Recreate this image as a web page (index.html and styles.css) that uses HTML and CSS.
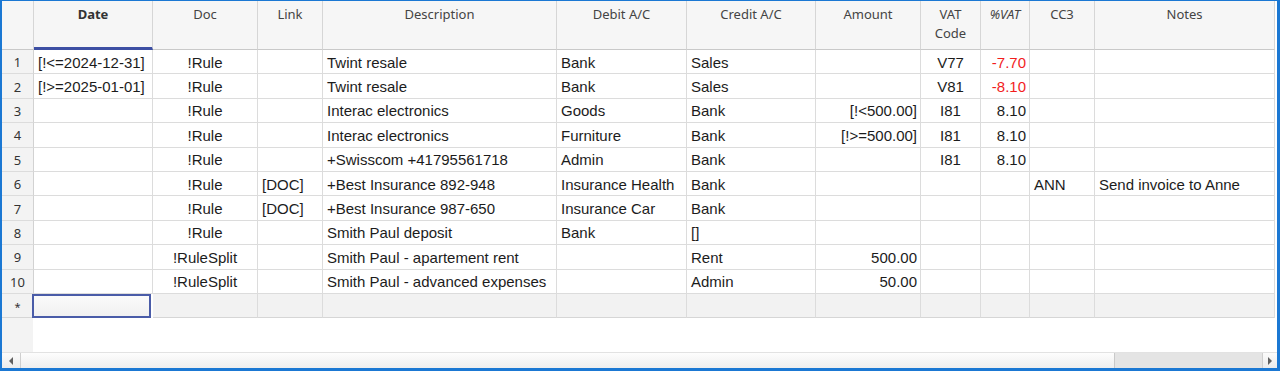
FILE: index.html
```html
<!DOCTYPE html>
<html>
<head>
<meta charset="utf-8">
<link rel="stylesheet" href="styles.css">
</head>
<body>
<div class="frame">
  <div class="viewport">
    <div class="row head">
      <div class="cell hc corner"></div>
      <div class="cell hc sel">Date</div>
      <div class="cell hc">Doc</div>
      <div class="cell hc">Link</div>
      <div class="cell hc">Description</div>
      <div class="cell hc">Debit A/C</div>
      <div class="cell hc">Credit A/C</div>
      <div class="cell hc">Amount</div>
      <div class="cell hc">VAT<br>Code</div>
      <div class="cell hc it">%VAT</div>
      <div class="cell hc">CC3</div>
      <div class="cell hc">Notes</div>
    </div>

    <div class="row">
      <div class="cell num">1</div>
      <div class="cell l">[!&lt;=2024-12-31]</div>
      <div class="cell c">!Rule</div>
      <div class="cell l"></div>
      <div class="cell l">Twint resale</div>
      <div class="cell l">Bank</div>
      <div class="cell l">Sales</div>
      <div class="cell r"></div>
      <div class="cell c">V77</div>
      <div class="cell r neg">-7.70</div>
      <div class="cell l"></div>
      <div class="cell l"></div>
    </div>
    <div class="row">
      <div class="cell num">2</div>
      <div class="cell l">[!&gt;=2025-01-01]</div>
      <div class="cell c">!Rule</div>
      <div class="cell l"></div>
      <div class="cell l">Twint resale</div>
      <div class="cell l">Bank</div>
      <div class="cell l">Sales</div>
      <div class="cell r"></div>
      <div class="cell c">V81</div>
      <div class="cell r neg">-8.10</div>
      <div class="cell l"></div>
      <div class="cell l"></div>
    </div>
    <div class="row">
      <div class="cell num">3</div>
      <div class="cell l"></div>
      <div class="cell c">!Rule</div>
      <div class="cell l"></div>
      <div class="cell l">Interac electronics</div>
      <div class="cell l">Goods</div>
      <div class="cell l">Bank</div>
      <div class="cell r">[!&lt;500.00]</div>
      <div class="cell c">I81</div>
      <div class="cell r">8.10</div>
      <div class="cell l"></div>
      <div class="cell l"></div>
    </div>
    <div class="row">
      <div class="cell num">4</div>
      <div class="cell l"></div>
      <div class="cell c">!Rule</div>
      <div class="cell l"></div>
      <div class="cell l">Interac electronics</div>
      <div class="cell l">Furniture</div>
      <div class="cell l">Bank</div>
      <div class="cell r">[!&gt;=500.00]</div>
      <div class="cell c">I81</div>
      <div class="cell r">8.10</div>
      <div class="cell l"></div>
      <div class="cell l"></div>
    </div>
    <div class="row">
      <div class="cell num">5</div>
      <div class="cell l"></div>
      <div class="cell c">!Rule</div>
      <div class="cell l"></div>
      <div class="cell l">+Swisscom +41795561718</div>
      <div class="cell l">Admin</div>
      <div class="cell l">Bank</div>
      <div class="cell r"></div>
      <div class="cell c">I81</div>
      <div class="cell r">8.10</div>
      <div class="cell l"></div>
      <div class="cell l"></div>
    </div>
    <div class="row">
      <div class="cell num">6</div>
      <div class="cell l"></div>
      <div class="cell c">!Rule</div>
      <div class="cell l">[DOC]</div>
      <div class="cell l">+Best Insurance 892-948</div>
      <div class="cell l">Insurance Health</div>
      <div class="cell l">Bank</div>
      <div class="cell r"></div>
      <div class="cell c"></div>
      <div class="cell r"></div>
      <div class="cell l">ANN</div>
      <div class="cell l">Send invoice to Anne</div>
    </div>
    <div class="row">
      <div class="cell num">7</div>
      <div class="cell l"></div>
      <div class="cell c">!Rule</div>
      <div class="cell l">[DOC]</div>
      <div class="cell l">+Best Insurance 987-650</div>
      <div class="cell l">Insurance Car</div>
      <div class="cell l">Bank</div>
      <div class="cell r"></div>
      <div class="cell c"></div>
      <div class="cell r"></div>
      <div class="cell l"></div>
      <div class="cell l"></div>
    </div>
    <div class="row">
      <div class="cell num">8</div>
      <div class="cell l"></div>
      <div class="cell c">!Rule</div>
      <div class="cell l"></div>
      <div class="cell l">Smith Paul deposit</div>
      <div class="cell l">Bank</div>
      <div class="cell l">[]</div>
      <div class="cell r"></div>
      <div class="cell c"></div>
      <div class="cell r"></div>
      <div class="cell l"></div>
      <div class="cell l"></div>
    </div>
    <div class="row">
      <div class="cell num">9</div>
      <div class="cell l"></div>
      <div class="cell c">!RuleSplit</div>
      <div class="cell l"></div>
      <div class="cell l">Smith Paul - apartement rent</div>
      <div class="cell l"></div>
      <div class="cell l">Rent</div>
      <div class="cell r">500.00</div>
      <div class="cell c"></div>
      <div class="cell r"></div>
      <div class="cell l"></div>
      <div class="cell l"></div>
    </div>
    <div class="row">
      <div class="cell num">10</div>
      <div class="cell l"></div>
      <div class="cell c">!RuleSplit</div>
      <div class="cell l"></div>
      <div class="cell l">Smith Paul - advanced expenses</div>
      <div class="cell l"></div>
      <div class="cell l">Admin</div>
      <div class="cell r">50.00</div>
      <div class="cell c"></div>
      <div class="cell r"></div>
      <div class="cell l"></div>
      <div class="cell l"></div>
    </div>
    <div class="row new">
      <div class="cell num star">*</div>
      <div class="cell l current"></div>
      <div class="cell c"></div>
      <div class="cell l"></div>
      <div class="cell l"></div>
      <div class="cell l"></div>
      <div class="cell l"></div>
      <div class="cell r"></div>
      <div class="cell c"></div>
      <div class="cell r"></div>
      <div class="cell l"></div>
      <div class="cell l"></div>
    </div>
  </div>
  <div class="hscroll">
    <div class="sbtn">
      <svg width="6" height="8" viewBox="0 0 6 8"><polygon points="5,0 5,8 1,4" fill="#606060"/></svg>
    </div>
    <div class="thumb"></div>
    <div class="track"></div>
    <div class="sbtn right">
      <svg width="6" height="8" viewBox="0 0 6 8"><polygon points="1,0 1,8 5,4" fill="#606060"/></svg>
    </div>
  </div>
</div>
</body>
</html>
```

FILE: styles.css
```css
html, body {
  margin: 0;
  padding: 0;
  background: #ffffff;
  overflow: hidden;
}

.frame {
  box-sizing: border-box;
  width: 1280px;
  height: 371px;
  border-style: solid;
  border-color: #1b78d3;
  border-width: 1px 3px 3px 2px;
  display: flex;
  flex-direction: column;
  background: #ffffff;
}

.viewport {
  flex: 1;
  overflow: hidden;
  background: linear-gradient(to right, #f3f3f3 0 31px, #ffffff 31px);
}

.row {
  display: grid;
  grid-template-columns: 32px 119px 105px 65px 234px 130px 129px 105px 60px 49px 65px 180px;
  height: 24.4px;
  width: 1273px;
}

.cell {
  box-sizing: border-box;
  border-right: 1px solid #dcdcdc;
  border-bottom: 1px solid #dcdcdc;
  font-family: "Liberation Sans", Arial, sans-serif;
  font-size: 15px;
  color: #1c1c1c;
  white-space: nowrap;
  overflow: hidden;
  display: flex;
  align-items: center;
  background: #ffffff;
  padding-top: 1px;
}

.cell.l { justify-content: flex-start; padding-left: 4px; }
.cell.c { justify-content: center; }
.cell.r { justify-content: flex-end; padding-right: 3px; }
.cell.neg { color: #f21d1d; }

.row.head {
  height: 49px;
}

.cell.hc {
  background: #f6f6f6;
  border-right-color: #d6d6d6;
  border-bottom-color: #c9c9c9;
  font-family: "Noto Sans", "Open Sans", sans-serif;
  font-size: 13px;
  line-height: 19px;
  color: #444444;
  align-items: flex-start;
  justify-content: center;
  text-align: center;
  padding-top: 4px;
}

.cell.hc.sel {
  font-weight: bold;
  color: #333333;
  border-bottom: 3px solid #3d4fa3;
}

.cell.hc.it { font-style: italic; }

.cell.num {
  background: #f3f3f3;
  border-right-color: #d2d2d2;
  justify-content: center;
  font-family: "Noto Sans", "Open Sans", sans-serif;
  font-size: 13px;
  color: #333333;
}

.cell.star {
  font-size: 11px;
  padding-top: 2px;
}

.row.new .cell {
  background: #f2f2f2;
  border-bottom-color: #d6d6d6;
}

.row.new .cell.current {
  background: linear-gradient(#fbfbfb, #f1f1f1);
  border: 2px solid #4a5ca8;
  margin-left: -2px;
  margin-right: 2px;
}

.hscroll {
  display: flex;
  height: 15px;
  border-top: 1px solid #e2e2e2;
  background: #eaeaea;
}

.sbtn {
  width: 18px;
  display: flex;
  align-items: center;
  justify-content: center;
  background: linear-gradient(#fbfbfb, #ececec);
  border-right: 1px solid #cfcfcf;
}

.sbtn.right {
  width: 14px;
  border-right: none;
  border-left: 1px solid #cfcfcf;
}

.thumb {
  width: 1093px;
  background: linear-gradient(#fdfdfd, #eeeeee);
  border-right: 1px solid #c9c9c9;
}

.track {
  flex: 1;
  background: #e4e4e4;
}
```
